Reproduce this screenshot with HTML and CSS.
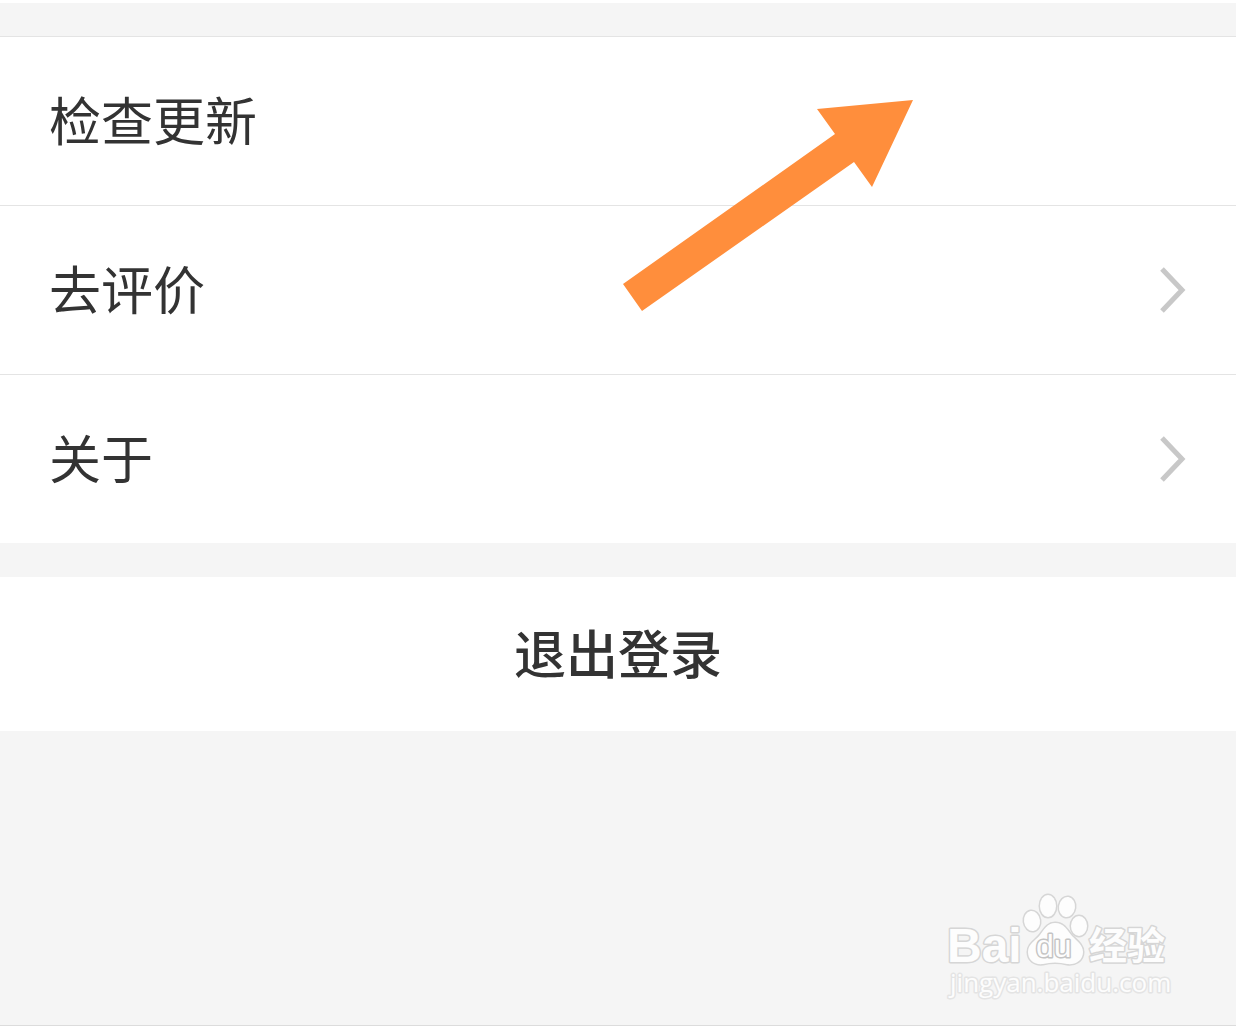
FILE: index.html
```html
<!DOCTYPE html>
<html lang="zh-CN">
<head>
    <meta charset="UTF-8">
    <meta name="viewport" content="width=device-width, initial-scale=1.0">
    <title>设置</title>
    <link rel="stylesheet" href="styles.css">
</head>
<body>
    <main class="settings">
        <ul class="menu">
            <li class="menu-row">
                <a class="menu-link" href="#update"><span class="menu-label">检查更新</span></a>
            </li>
            <li class="menu-row">
                <a class="menu-link" href="#review">
                    <span class="menu-label">去评价</span>
                    <svg class="chevron" viewBox="0 0 28 48" aria-hidden="true"><path d="M3 3L23 24L3 45"/></svg>
                </a>
            </li>
            <li class="menu-row">
                <a class="menu-link" href="#about">
                    <span class="menu-label">关于</span>
                    <svg class="chevron" viewBox="0 0 28 48" aria-hidden="true"><path d="M3 3L23 24L3 45"/></svg>
                </a>
            </li>
        </ul>
        <button class="logout" type="button">退出登录</button>

        <!-- Pointer arrow over the list -->
        <svg class="arrow" viewBox="0 0 300 220" aria-hidden="true">
            <path d="M295 4L199 13L217 38L5 188L24 215L236 66L254 91Z"/>
        </svg>
    </main>

    <svg class="watermark" viewBox="0 0 230 116">
        <g class="paw">
            <ellipse cx="87" cy="31" rx="8" ry="10" transform="rotate(-8 87 31)"/>
            <ellipse cx="103" cy="16" rx="8" ry="11"/>
            <ellipse cx="122" cy="17" rx="8" ry="10" transform="rotate(8 122 17)"/>
            <ellipse cx="134" cy="36" rx="8" ry="10"/>
            <path d="M110 33C119 33 122 40 127 46C132 51 138 55 138 62C138 71 130 75 122 74C114 72 106 72 98 74C89 75 83 70 83 62C83 54 90 51 95 45C99 40 102 33 110 33Z"/>
        </g>
        <text class="brand" x="2" y="72">Bai</text>
        <text class="brand-du" x="91" y="67">du</text>
        <text class="brand-cn" x="144" y="69">经验</text>
        <text class="site" x="5" y="102">jingyan.baidu.com</text>
    </svg>
</body>
</html>
```

FILE: styles.css
```css
* {
    box-sizing: border-box;
}
body {
    margin: 0;
    min-height: 100vh;
    position: relative;
    font-family: "Noto Sans CJK SC", sans-serif;
    background-color: #f5f5f5;
    border-top: 3px solid #fff;
    border-bottom: 1px solid #dcdcdc;
}
.settings {
    position: relative;
    padding-top: 33px;
}
.menu {
    list-style: none;
    margin: 0 0 34px;
    padding: 0;
    background-color: #fff;
    border-top: 1px solid #e4e4e4;
}
.menu-row + .menu-row {
    border-top: 1px solid #e4e4e4;
}
.menu-link {
    display: flex;
    align-items: center;
    justify-content: space-between;
    padding: 46px 49px;
    font-size: 52px;
    line-height: 72px;
    color: #333;
    text-decoration: none;
}
.menu-label {
    padding-bottom: 4px;
}
.chevron {
    width: 28px;
    height: 48px;
    fill: none;
    stroke: #c8c8c8;
    stroke-width: 5;
}
.logout {
    display: block;
    width: 100%;
    padding: 39px 49px 43px;
    border: none;
    background-color: #fff;
    font-family: inherit;
    font-size: 52px;
    font-weight: 500;
    line-height: 72px;
    color: #333;
    cursor: pointer;
}
.arrow {
    position: absolute;
    top: 93px;
    left: 50%;
    width: 300px;
    height: 220px;
    fill: #ff8e3c;
    pointer-events: none;
}
.watermark {
    position: absolute;
    right: 61px;
    bottom: 19px;
    width: 230px;
    height: 116px;
    fill: #fdfdfd;
    stroke: #d6d6d6;
    stroke-width: 3;
    stroke-linejoin: round;
    paint-order: stroke;
}
.brand {
    font: bold 48px "Liberation Sans", sans-serif;
}
.brand-du {
    font: 32px "Liberation Sans", sans-serif;
    stroke: #c4c4c4;
}
.brand-cn {
    font: bold 38px "Noto Sans CJK SC", sans-serif;
}
.site {
    font: 26px "Open Sans", sans-serif;
    stroke: #e4e4e4;
}
```
